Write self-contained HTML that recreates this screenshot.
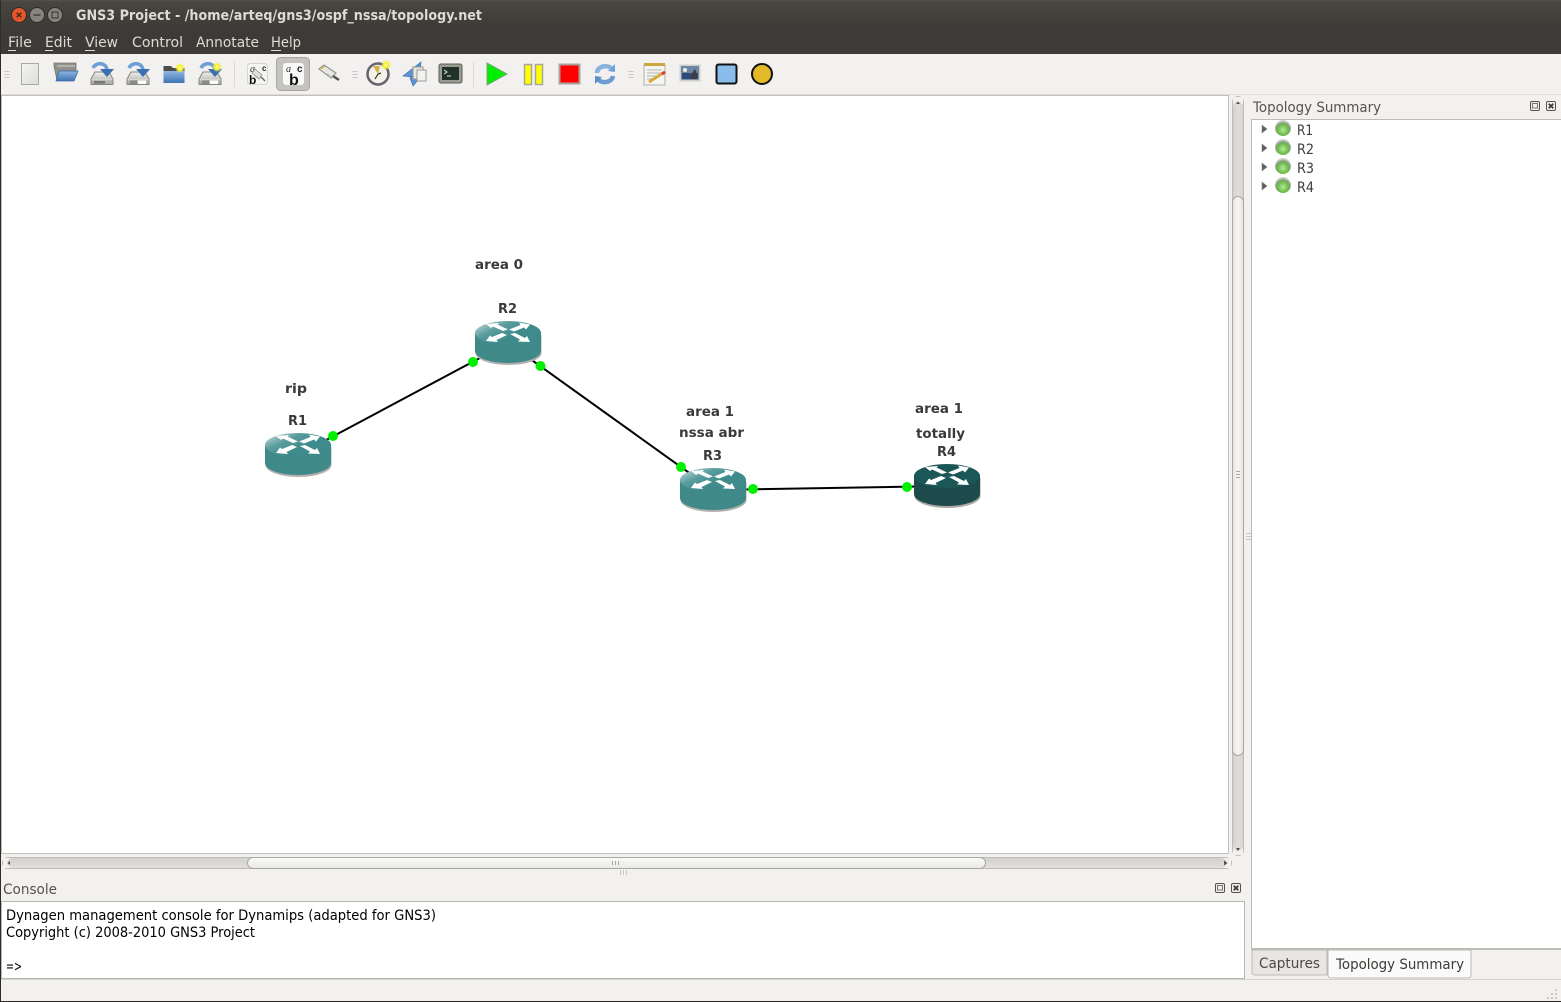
<!DOCTYPE html>
<html><head><meta charset="utf-8"><title>GNS3 Project</title>
<style>
html,body{margin:0;padding:0;background:#f2f1f0;overflow:hidden}
svg{display:block}
text{font-family:"DejaVu Sans","Liberation Sans",sans-serif;font-size:14px}
.m{fill:#dfdbd2}
.t{fill:#3c3b37}
.l{font-weight:bold;font-size:13.5px;fill:#3a3a3a}
.b{fill:#000}
</style></head><body>
<svg width="1561" height="1002" viewBox="0 0 1561 1002" xmlns="http://www.w3.org/2000/svg">
<defs>
<linearGradient id="tb" x1="0" y1="0" x2="0" y2="1"><stop offset="0" stop-color="#55534d"/><stop offset=".06" stop-color="#48463f"/><stop offset="1" stop-color="#3c3b37"/></linearGradient>
<linearGradient id="rt" x1="0" y1="0" x2=".65" y2=".5"><stop offset="0" stop-color="#cfe2e2"/><stop offset=".55" stop-color="#5a9c9c"/><stop offset="1" stop-color="#3f8b8b"/></linearGradient>
<linearGradient id="vt" x1="0" y1="0" x2="1" y2="0"><stop offset="0" stop-color="#d2d0cc"/><stop offset=".5" stop-color="#e0dedb"/><stop offset="1" stop-color="#d6d4d0"/></linearGradient>
<linearGradient id="vh" x1="0" y1="0" x2="1" y2="0"><stop offset="0" stop-color="#e6e5e3"/><stop offset=".5" stop-color="#f6f5f4"/><stop offset="1" stop-color="#e6e5e3"/></linearGradient>
<linearGradient id="ht" x1="0" y1="0" x2="0" y2="1"><stop offset="0" stop-color="#d2d0cc"/><stop offset="1" stop-color="#e2e0dd"/></linearGradient>
<linearGradient id="hh" x1="0" y1="0" x2="0" y2="1"><stop offset="0" stop-color="#fbfbfa"/><stop offset="1" stop-color="#e9e8e6"/></linearGradient>
<radialGradient id="led" cx=".5" cy=".62" r=".55"><stop offset="0" stop-color="#b5e89a"/><stop offset=".62" stop-color="#68bb45"/><stop offset=".8" stop-color="#86a07e"/><stop offset="1" stop-color="#cfcfcc"/></radialGradient>
<linearGradient id="fol" x1="0" y1="0" x2="0" y2="1"><stop offset="0" stop-color="#8fb6e2"/><stop offset="1" stop-color="#3f73b5"/></linearGradient>
<linearGradient id="dsk" x1="0" y1="0" x2="0" y2="1"><stop offset="0" stop-color="#f0f0ee"/><stop offset="1" stop-color="#a5a5a1"/></linearGradient>
<linearGradient id="pg" x1="0" y1="0" x2="1" y2="1"><stop offset="0" stop-color="#f4f4f3"/><stop offset="1" stop-color="#dcdcda"/></linearGradient>
<radialGradient id="star"><stop offset="0" stop-color="#ffffa0"/><stop offset=".55" stop-color="#f5ee30"/><stop offset="1" stop-color="#f5ee30" stop-opacity="0"/></radialGradient>

<g id="arrows" fill="#fff">
  <path d="M11 3 L24 2 L22.500 3.500 L33 8.500 L28 10 L18 5.500 L16 7 Z"/>
  <path d="M55 3.500 L44 1.500 L45.500 4 L34 8.500 L39 10.500 L49 6.500 L51 8.500 Z"/>
  <path d="M11 20 L23 21 L21.500 19 L32 14 L27 12 L17 16 L15 14.500 Z"/>
  <path d="M35 13 L40 12 L50 17 L52 15 L55 21 L43 20.500 L45 18.500 Z"/>
</g>
<g id="r1">
  <path d="M0 12 V30 A33 12 0 0 0 66 30 V12 Z" fill="#b0b0ae" transform="translate(0.5,2)"/>
  <path d="M0 12 V30 A33 12 0 0 0 66 30 V12 Z" fill="#3f8989"/>
  <ellipse cx="33" cy="12" rx="33" ry="12" fill="url(#rt)"/>
  <use href="#arrows"/>
</g>
<g id="r2">
  <path d="M0 12 V30 A33 12 0 0 0 66 30 V12 Z" fill="#a8a8a6" transform="translate(0.5,2)"/>
  <path d="M0 12 V30 A33 12 0 0 0 66 30 V12 Z" fill="#1d4a4a"/>
  <ellipse cx="33" cy="12" rx="33" ry="12" fill="#1c5757"/>
  <use href="#arrows"/>
</g>
<g id="disk">
  <path d="M-7 -3 H7 L11 4 V9.500 H-11 V4 Z" fill="url(#dsk)" stroke="#85857f" stroke-width="1"/>
  <path d="M-10.500 4.500 H10.500" stroke="#d4d4d1"/>
</g>
<g id="swoop">
  <path d="M-9 -7 C-6 -13 4 -13 5 -5" fill="none" stroke="#6ea0d6" stroke-width="3.600"/>
  <path d="M-2 -6 H12 L5 2 Z" fill="#3b6fb0"/>
</g>
<circle id="st" r="5" fill="url(#star)"/>
<g id="grip" fill="#c9c7c4"><rect x="-2.500" y="-4" width="5" height="1"/><rect x="-2.500" y="-1" width="5" height="1"/><rect x="-2.500" y="2" width="5" height="1"/></g>
<g id="dock">
  <rect x="1.500" y=".5" width="9" height="9" rx="1.500" fill="none" stroke="#55534f"/>
  <rect x="3.500" y="2.500" width="5" height="4.500" fill="none" stroke="#55534f" stroke-width=".8"/>
</g>
<g id="dclose">
  <rect x=".5" y=".5" width="9" height="9" rx="1.500" fill="none" stroke="#55534f"/>
  <path d="M2.700 2.700 L7.300 7.300 M7.300 2.700 L2.700 7.300" stroke="#3c3b37" stroke-width="1.800"/>
</g>
<g id="ti"><path d="M0 -4 L5 0 L0 4 Z" fill="#5c5c58" stroke="#8a8a86" stroke-width=".6"/></g>
</defs>

<rect width="1561" height="1002" fill="#f2f1f0"/>

<!-- title + menu -->
<rect width="1561" height="54" fill="#3c3b37"/>
<rect width="1561" height="28" fill="url(#tb)"/>
<circle cx="19" cy="15" r="7.500" fill="#e2572a" stroke="#2d2c29"/>
<path d="M16.700 12.700 L21.300 17.300 M21.300 12.700 L16.700 17.300" stroke="#4a2415" stroke-width="1.400"/>
<circle cx="37" cy="15" r="7.500" fill="#86847e" stroke="#2d2c29"/>
<rect x="33.500" y="14.300" width="7" height="1.500" fill="#3f3e3a"/>
<circle cx="55" cy="15" r="7.500" fill="#86847e" stroke="#2d2c29"/>
<rect x="52" y="12" width="6" height="6" fill="none" stroke="#3f3e3a" stroke-width="1.200"/>
<text x="76" y="20" textLength="406" lengthAdjust="spacingAndGlyphs" class="m" style="font-weight:bold">GNS3 Project - /home/arteq/gns3/ospf_nssa/topology.net</text>
<text x="8" y="47" textLength="24" lengthAdjust="spacingAndGlyphs" class="m">File</text>
<text x="45" y="47" textLength="27" lengthAdjust="spacingAndGlyphs" class="m">Edit</text>
<text x="85" y="47" textLength="33" lengthAdjust="spacingAndGlyphs" class="m">View</text>
<text x="132" y="47" textLength="51" lengthAdjust="spacingAndGlyphs" class="m">Control</text>
<text x="196" y="47" textLength="63" lengthAdjust="spacingAndGlyphs" class="m">Annotate</text>
<text x="271" y="47" textLength="30" lengthAdjust="spacingAndGlyphs" class="m">Help</text>
<g fill="#dfdbd2"><rect x="8" y="50" width="8" height="1"/><rect x="45" y="50" width="8" height="1"/><rect x="85" y="50" width="10" height="1"/><rect x="271" y="50" width="10" height="1"/></g>

<!-- toolbar -->
<rect y="54" width="1561" height="40" fill="#f2f1f0"/>
<use href="#grip" x="7" y="75"/>
<use href="#grip" x="355" y="75"/>
<use href="#grip" x="631" y="75"/>
<rect x="234" y="62" width="1" height="25" fill="#dbd9d6"/>
<rect x="473" y="62" width="1" height="25" fill="#dbd9d6"/>

<!-- new -->
<rect x="21.500" y="63.500" width="17" height="21" fill="url(#pg)" stroke="#a9a9a5"/>
<!-- open -->
<g transform="translate(66,74)">
  <path d="M-12 -11 H10 V-3 H-7 L-9 6 L-12 -8 Z" fill="#8f8f8b" stroke="#77776f" stroke-width=".8"/>
  <path d="M-9 -8 H9" stroke="#d6d6d3"/>
  <path d="M-7 -3 H12 L8 7 H-10 Z" fill="url(#fol)" stroke="#3c6aa4" stroke-width=".8"/>
</g>
<!-- save -->
<g transform="translate(102,75)"><use href="#disk"/><rect x="-8" y="6" width="11" height="2.500" fill="#77776f"/><use href="#swoop"/></g>
<!-- save as -->
<g transform="translate(138,75)"><use href="#disk"/><rect x="-8" y="5.500" width="7" height="3.500" fill="#8a8a86"/><rect x="0" y="5.500" width="8" height="3.500" fill="#fff"/><use href="#swoop"/></g>
<!-- new project folder -->
<g transform="translate(174,75)">
  <path d="M-10.500 -9 H-3 L-1 -7 H10.500 V8 H-10.500 Z" fill="#4d4d49"/>
  <rect x="-10.500" y="-4" width="21" height="12" fill="url(#fol)"/>
  <use href="#st" x="6" y="-7"/>
</g>
<!-- snapshot -->
<g transform="translate(210,75)"><use href="#disk"/><rect x="-8" y="5.500" width="7" height="3.500" fill="#8a8a86"/><rect x="0" y="5.500" width="8" height="3.500" fill="#fff"/><use href="#swoop"/><use href="#st" x="7" y="-8"/></g>
<!-- abc -->
<rect x="247.500" y="63.500" width="20" height="21" rx="3" fill="#f4f4f2" stroke="#d5d4d1"/>
<text x="250" y="72" style="font:italic 10px 'Liberation Serif',serif" fill="#333">a</text>
<text x="262" y="71" style="font:bold 8px 'Liberation Sans',sans-serif" fill="#222">c</text>
<text x="249" y="84" style="font:bold 12px 'Liberation Sans',sans-serif" fill="#111">b</text>
<path d="M255 69 L262 75 L259 79 L252 73 Z" fill="#dededa" stroke="#8e8e88" stroke-width=".8"/>
<path d="M261 77 L265 81" stroke="#666" stroke-width="1.400"/>
<rect x="276.500" y="57.500" width="33" height="33" rx="4" fill="#c5c3c0" stroke="#a8a6a2"/>
<rect x="283" y="63" width="21" height="22" rx="3" fill="#f8f8f7"/>
<text x="286" y="72" style="font:italic 10px 'Liberation Serif',serif" fill="#333">a</text>
<text x="297" y="72" style="font:bold 10px 'Liberation Sans',sans-serif" fill="#222">c</text>
<text x="289" y="85" style="font:bold 16px 'Liberation Sans',sans-serif" fill="#111">b</text>
<!-- ethernet -->
<g transform="translate(329,73)">
  <path d="M-10 -4 L-5 -8 L7 0 L2 5 Z" fill="#e6e6e3" stroke="#85857f"/>
  <path d="M-8 -4 L-4 -7" stroke="#d9c24c" stroke-width="1.600"/>
  <path d="M-2 1 L2 5 L7 0" fill="none" stroke="#a5a5a0" stroke-width="1.500"/>
  <path d="M4 3 L10 7" stroke="#55554f" stroke-width="2.500"/>
</g>
<!-- clock -->
<g transform="translate(378,74)">
  <circle r="10.500" fill="#f3f1e8" stroke="#66626e" stroke-width="2.500"/>
  <path d="M0 0 L-5 -8 H2 Z" fill="#d3b24a"/>
  <path d="M0 0 L3 -1 M0 0 L-3 5" stroke="#333" stroke-width="1.200"/>
  <use href="#st" x="8" y="-9"/>
</g>
<!-- migrate / docs -->
<g transform="translate(414,74)">
  <path d="M-11 2 L7 -12 L6 -2 L0 3 Z" fill="#5f93cf" stroke="#3e6faf" stroke-width=".7"/>
  <path d="M-4 4 L10 -1 L-1 12 Z" fill="#5f93cf" stroke="#3e6faf" stroke-width=".7"/>
  <rect x="-1" y="-7" width="10" height="12" fill="#e7e7e4" stroke="#999"/>
  <rect x="3" y="-4" width="9" height="11" fill="#f2f2f0" stroke="#999"/>
</g>
<!-- terminal -->
<rect x="439" y="64" width="23" height="19" rx="2" fill="#9a9c92" stroke="#5c5e56"/>
<rect x="442" y="67" width="17" height="13" fill="#22322a"/>
<path d="M444 70 L447 72 L444 74 M447 76 H451" fill="none" stroke="#d8e8d8"/>
<!-- start -->
<path d="M487 63 L507 74 L487 85 Z" fill="#00ee00" stroke="#7ea07e" stroke-width="1"/>
<!-- pause -->
<rect x="524.500" y="64.500" width="7" height="20" fill="#ffff00" stroke="#a6a69c" stroke-width="1.500"/>
<rect x="535.500" y="64.500" width="7" height="20" fill="#ffff00" stroke="#a6a69c" stroke-width="1.500"/>
<!-- stop -->
<rect x="559.500" y="64.500" width="20" height="19" fill="#ff0000" stroke="#a8a29e" stroke-width="2"/>
<!-- reload -->
<g transform="translate(605,74)" fill="none">
  <path d="M-8 -1 C-8 -8 3 -10 7 -5" stroke="#8ab2de" stroke-width="4.500"/>
  <path d="M3 -3 L10 -2 L10 -10 Z" fill="#6fa0d6"/>
  <path d="M8 2 C7 9 -4 10 -7 5" stroke="#6b9bd0" stroke-width="4.500"/>
  <path d="M-3 3 L-10 2 L-10 10 Z" fill="#5b8fc9"/>
</g>
<!-- note -->
<g transform="translate(654,74)">
  <rect x="-10" y="-9" width="21" height="20" fill="#f4f4f1" stroke="#b0b0aa"/>
  <rect x="-10" y="-11" width="21" height="3" fill="#c9a93f"/>
  <path d="M-7 -4 H8 M-7 -1 H6 M-7 2 H2 M-7 5 H-1" stroke="#b5b5b0"/>
  <path d="M-5 8 L9 -1" stroke="#d8a838" stroke-width="3"/>
  <path d="M8 0 L11 -2" stroke="#d83a3a" stroke-width="3"/>
</g>
<!-- image -->
<rect x="680.500" y="65.500" width="19" height="15" fill="#2d4a7c" stroke="#cfcfcc" stroke-width="2"/>
<rect x="681" y="66" width="18" height="7" fill="#6d86a8"/>
<circle cx="685" cy="70" r="2" fill="#f0f0d8"/>
<path d="M692 73 L695 69 L697 74 L697 79 L690 79 Z" fill="#3d3d45"/>
<!-- rect -->
<rect x="716.500" y="64.500" width="20" height="19" rx="2" fill="#8cbcec" stroke="#111" stroke-width="2"/>
<!-- ellipse -->
<circle cx="762" cy="74" r="10" fill="#e3b92a" stroke="#111" stroke-width="2"/>

<rect y="94" width="1561" height="1" fill="#dedcd8"/>

<!-- left window edge -->
<rect x="0" y="0" width="1" height="1002" fill="#2d2c29"/>

<!-- canvas -->
<rect x="1.500" y="95.500" width="1227" height="758" fill="#fff" stroke="#c2c0bb"/>

<!-- links -->
<g stroke="#000" stroke-width="2">
  <line x1="298" y1="455" x2="508" y2="343"/>
  <line x1="508" y1="343" x2="713" y2="490"/>
  <line x1="713" y1="490" x2="947" y2="486"/>
</g>
<use href="#r1" x="265" y="433"/>
<use href="#r1" x="475" y="321"/>
<use href="#r1" x="680" y="468"/>
<use href="#r2" x="914" y="464"/>
<g fill="#00f000">
  <circle cx="333" cy="436" r="5"/><circle cx="473" cy="362" r="5"/>
  <circle cx="540.500" cy="366" r="5"/><circle cx="681" cy="467" r="5"/>
  <circle cx="753" cy="489" r="5"/><circle cx="907" cy="487" r="5"/>
</g>
<text x="475" y="269" textLength="48" lengthAdjust="spacingAndGlyphs" class="l">area 0</text>
<text x="498" y="313" textLength="19" lengthAdjust="spacingAndGlyphs" class="l">R2</text>
<text x="285" y="393" textLength="22" lengthAdjust="spacingAndGlyphs" class="l">rip</text>
<text x="288" y="425" textLength="19" lengthAdjust="spacingAndGlyphs" class="l">R1</text>
<text x="686" y="416" textLength="48" lengthAdjust="spacingAndGlyphs" class="l">area 1</text>
<text x="679" y="437" textLength="65" lengthAdjust="spacingAndGlyphs" class="l">nssa abr</text>
<text x="703" y="460" textLength="19" lengthAdjust="spacingAndGlyphs" class="l">R3</text>
<text x="915" y="413" textLength="48" lengthAdjust="spacingAndGlyphs" class="l">area 1</text>
<text x="916" y="438" textLength="49" lengthAdjust="spacingAndGlyphs" class="l">totally</text>
<text x="937" y="456" textLength="19" lengthAdjust="spacingAndGlyphs" class="l">R4</text>

<!-- vertical scrollbar -->
<rect x="1232.500" y="96.500" width="11" height="759" rx="5.500" fill="url(#vt)" stroke="#bdbbb6"/>
<path d="M1233 108 C1233 99 1243 99 1243 108 V97 H1233 Z" fill="#f2f1f0"/>
<path d="M1233 844 C1233 853 1243 853 1243 844 V855 H1233 Z" fill="#f2f1f0"/>
<rect x="1232.500" y="196.500" width="11" height="559" rx="5.500" fill="url(#vh)" stroke="#a9a7a2"/>
<path d="M1236 104 L1240 104 L1238 101.500 Z" fill="#55534f"/>
<path d="M1236 848 L1240 848 L1238 851 Z" fill="#55534f"/>
<g fill="#a9a7a2"><rect x="1236" y="471" width="4" height="1"/><rect x="1236" y="474" width="4" height="1"/><rect x="1236" y="477" width="4" height="1"/></g>
<g fill="#c9c7c4"><rect x="1246" y="533" width="5" height="1"/><rect x="1246" y="536" width="5" height="1"/><rect x="1246" y="539" width="5" height="1"/></g>

<!-- horizontal scrollbar -->
<rect x="2.500" y="857.500" width="1229" height="11" rx="5.500" fill="url(#ht)" stroke="#bdbbb6"/>
<path d="M14 858 C5 858 5 868 14 868 H3 V858 Z" fill="#f2f1f0"/>
<path d="M1220 858 C1229 858 1229 868 1220 868 H1231 V858 Z" fill="#f2f1f0"/>
<rect x="247.500" y="857.500" width="738" height="11" rx="5.500" fill="url(#hh)" stroke="#a9a7a2"/>
<path d="M10 861 V865 L7.500 863 Z" fill="#55534f"/>
<path d="M1224 860.500 V865.500 L1227.500 863 Z" fill="#55534f"/>
<g fill="#a9a7a2"><rect x="612" y="861" width="1" height="4"/><rect x="615" y="861" width="1" height="4"/><rect x="618" y="861" width="1" height="4"/></g>
<g fill="#c9c7c4"><rect x="620" y="870" width="1" height="5"/><rect x="623" y="870" width="1" height="5"/><rect x="626" y="870" width="1" height="5"/></g>

<!-- console -->
<text x="3" y="894" textLength="54" lengthAdjust="spacingAndGlyphs" class="t" style="fill:#55534f">Console</text>
<use href="#dock" x="1214" y="883"/>
<use href="#dclose" x="1231" y="883"/>
<rect x="1.500" y="901.500" width="1243" height="77" fill="#fff" stroke="#b9b7b2"/>
<text x="6" y="920" textLength="430" lengthAdjust="spacingAndGlyphs" class="b">Dynagen management console for Dynamips (adapted for GNS3)</text>
<text x="6" y="937" textLength="249" lengthAdjust="spacingAndGlyphs" class="b">Copyright (c) 2008-2010 GNS3 Project</text>
<text x="6" y="971" textLength="16" lengthAdjust="spacingAndGlyphs" class="b">=&gt;</text>

<!-- topology dock -->
<text x="1253" y="112" textLength="128" lengthAdjust="spacingAndGlyphs" class="t" style="fill:#55534f">Topology Summary</text>
<use href="#dock" x="1529" y="101"/>
<use href="#dclose" x="1546" y="101"/>
<rect x="1251.500" y="119.500" width="311" height="829" fill="#fff" stroke="#bdbbb6"/>
<g>
  <use href="#ti" x="1262" y="129"/><circle cx="1283" cy="128" r="8" fill="url(#led)"/><text x="1297" y="135" textLength="16" lengthAdjust="spacingAndGlyphs" class="t">R1</text>
  <use href="#ti" x="1262" y="148"/><circle cx="1283" cy="147" r="8" fill="url(#led)"/><text x="1297" y="154" textLength="17" lengthAdjust="spacingAndGlyphs" class="t">R2</text>
  <use href="#ti" x="1262" y="167"/><circle cx="1283" cy="166" r="8" fill="url(#led)"/><text x="1297" y="173" textLength="17" lengthAdjust="spacingAndGlyphs" class="t">R3</text>
  <use href="#ti" x="1262" y="186"/><circle cx="1283" cy="185" r="8" fill="url(#led)"/><text x="1297" y="192" textLength="17" lengthAdjust="spacingAndGlyphs" class="t">R4</text>
</g>
<rect x="1251" y="948" width="310" height="2" fill="#bdbbb6"/>
<!-- tabs -->
<path d="M1252 950 H1327 V975 Q1327 975 1324 975 H1255 Q1252 975 1252 972 Z" fill="#e8e6e4" stroke="#bdbbb6"/>
<path d="M1328 950 H1471 V975 Q1471 978 1468 978 H1331 Q1328 978 1328 975 Z" fill="#fafafa" stroke="#bdbbb6"/>
<text x="1259" y="968" textLength="61" lengthAdjust="spacingAndGlyphs" class="t" style="fill:#4c4a46">Captures</text>
<text x="1336" y="969" textLength="128" lengthAdjust="spacingAndGlyphs" class="t" style="fill:#3c3b37">Topology Summary</text>

<!-- status bar -->
<rect x="1" y="979" width="1560" height="1" fill="#d5d3cf"/>
<g fill="#c9c7c4"><rect x="1555" y="989" width="2" height="2"/><rect x="1551" y="993" width="2" height="2"/><rect x="1555" y="993" width="2" height="2"/><rect x="1547" y="997" width="2" height="2"/><rect x="1551" y="997" width="2" height="2"/><rect x="1555" y="997" width="2" height="2"/></g>
<rect y="1001" width="1561" height="1" fill="#2d2c29"/>
</svg>
</body></html>
